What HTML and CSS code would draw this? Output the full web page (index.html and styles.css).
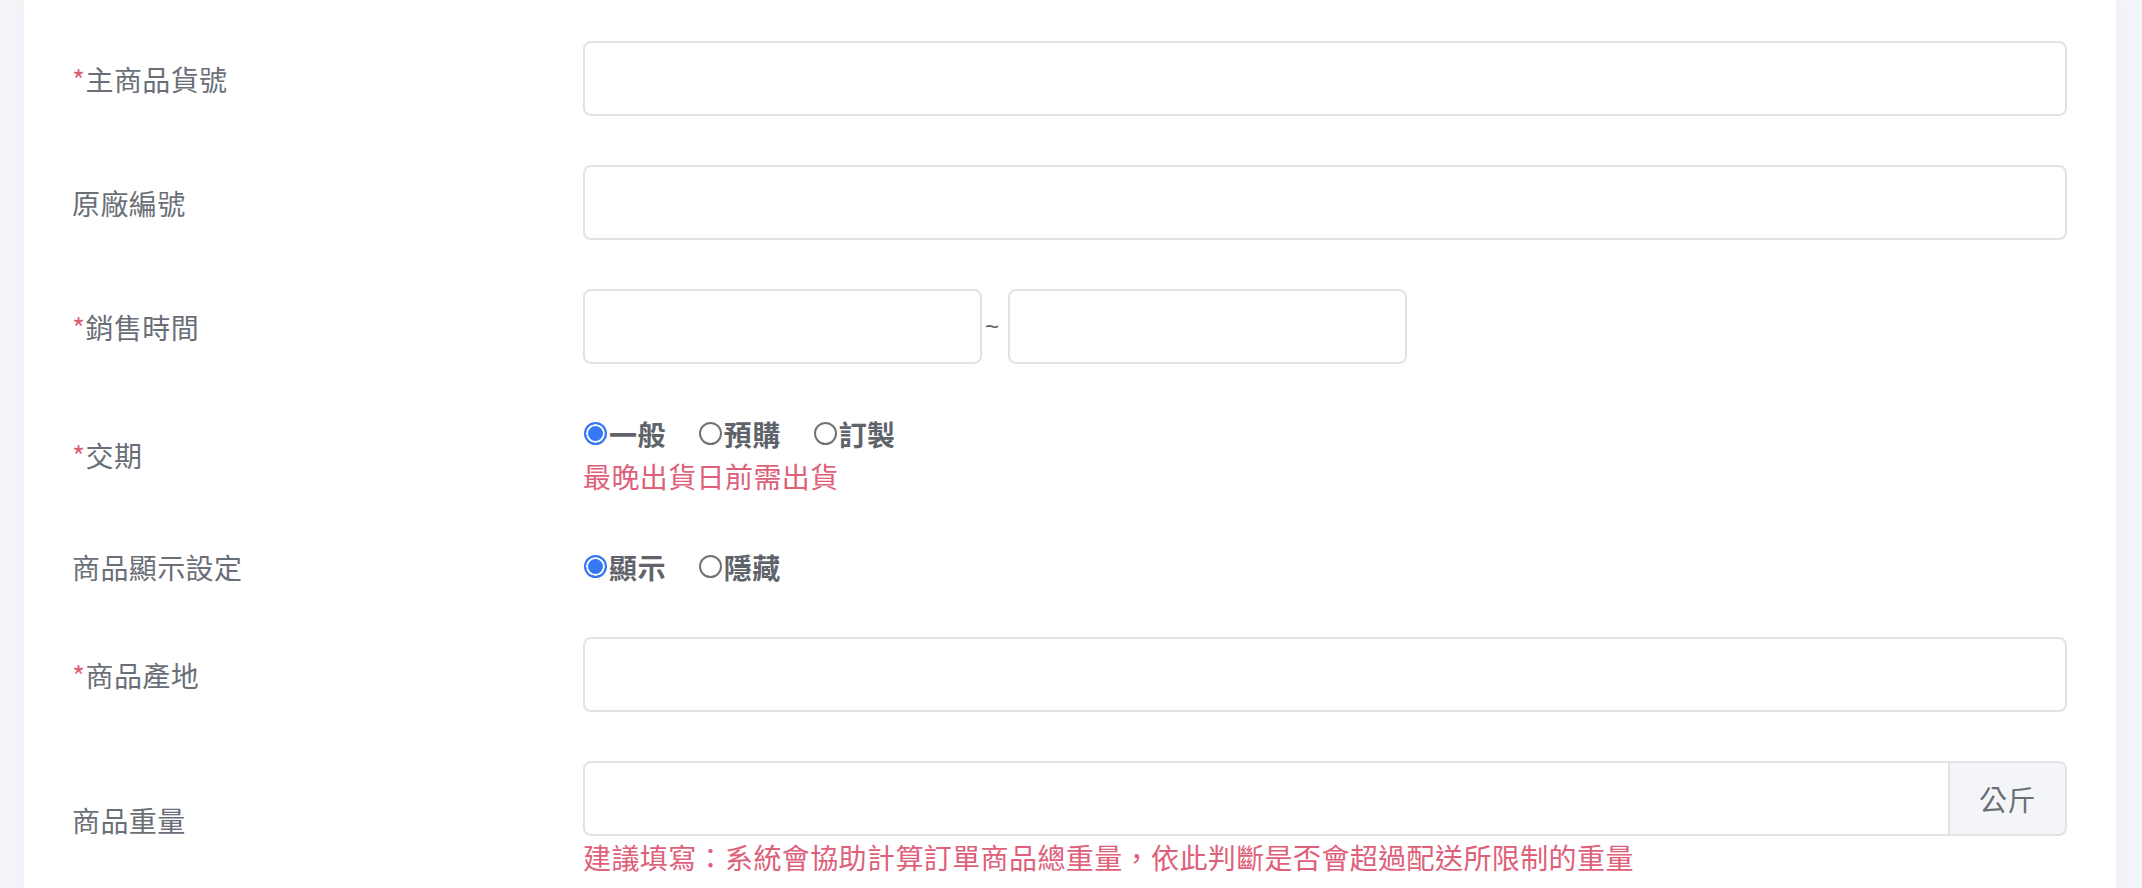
FILE: index.html
```html
<!DOCTYPE html>
<html lang="zh-Hant">
<head>
    <meta charset="UTF-8">
    <meta name="viewport" content="width=device-width, initial-scale=1.0">
    <title>商品資料</title>
    <link rel="stylesheet" href="styles.css">
</head>
<body>
    <div class="card">
        <form id="productForm">
            <div class="form-row">
                <label class="form-label" for="sku"><span class="required">*</span>主商品貨號</label>
                <div class="form-field">
                    <input type="text" id="sku" class="form-control">
                </div>
            </div>

            <div class="form-row">
                <label class="form-label" for="vendorNo">原廠編號</label>
                <div class="form-field">
                    <input type="text" id="vendorNo" class="form-control">
                </div>
            </div>

            <div class="form-row">
                <label class="form-label" for="saleStart"><span class="required">*</span>銷售時間</label>
                <div class="form-field date-range">
                    <input type="text" id="saleStart" class="form-control date">
                    <span class="tilde">~</span>
                    <input type="text" id="saleEnd" class="form-control date">
                </div>
            </div>

            <div class="form-row">
                <label class="form-label"><span class="required">*</span>交期</label>
                <div class="form-field">
                    <div class="radio-group">
                        <label class="radio"><input type="radio" name="delivery" checked>一般</label>
                        <label class="radio"><input type="radio" name="delivery">預購</label>
                        <label class="radio"><input type="radio" name="delivery">訂製</label>
                    </div>
                    <div class="hint">最晚出貨日前需出貨</div>
                </div>
            </div>

            <div class="form-row">
                <label class="form-label">商品顯示設定</label>
                <div class="form-field">
                    <div class="radio-group">
                        <label class="radio"><input type="radio" name="display" checked>顯示</label>
                        <label class="radio"><input type="radio" name="display">隱藏</label>
                    </div>
                </div>
            </div>

            <div class="form-row">
                <label class="form-label" for="origin"><span class="required">*</span>商品產地</label>
                <div class="form-field">
                    <input type="text" id="origin" class="form-control">
                </div>
            </div>

            <div class="form-row">
                <label class="form-label" for="weight">商品重量</label>
                <div class="form-field">
                    <div class="input-group">
                        <input type="text" id="weight" class="form-control">
                        <span class="addon">公斤</span>
                    </div>
                    <div class="hint">建議填寫：系統會協助計算訂單商品總重量，依此判斷是否會超過配送所限制的重量</div>
                </div>
            </div>
        </form>
    </div>
</body>
</html>
```

FILE: styles.css
```css
html {
    overflow: hidden;
}
body {
    margin: 0;
    font-family: "Noto Sans CJK TC", "Noto Sans", sans-serif;
    letter-spacing: 0.4px;
    background-color: #f4f5f9;
    color: #6a6f77;
}
.card {
    margin: 0 26px 0 24px;
    padding: 41px 49px 0 48px;
    min-height: 100vh;
    background: #ffffff;
    box-shadow: 0 0 24px rgba(30, 40, 90, 0.03);
}
.form-row {
    display: flex;
    align-items: center;
    margin-bottom: 49px;
}
.form-label {
    flex: none;
    width: 511px;
    font-size: 28px;
    line-height: 42px;
}
.required {
    color: #de6079;
}
.form-field {
    flex: 1;
    min-width: 0;
}
.form-control {
    display: block;
    box-sizing: border-box;
    width: 100%;
    height: 75px;
    margin: 0;
    padding: 0 20px;
    font-size: 28px;
    border: 2px solid #e1e3e7;
    border-radius: 8px;
    background: #ffffff;
    outline: none;
}
.date-range {
    display: flex;
    align-items: center;
}
.form-control.date {
    width: 399px;
}
.tilde {
    width: 23px;
    padding-left: 3px;
    font-family: "Liberation Sans", sans-serif;
    font-size: 24px;
    color: #60656c;
}
.radio-group {
    display: flex;
    align-items: center;
    font-size: 28px;
    line-height: 42px;
    font-weight: bold;
    color: #5f646b;
}
.radio {
    display: flex;
    align-items: center;
    margin-right: 32px;
}
.radio input {
    appearance: none;
    -webkit-appearance: none;
    box-sizing: border-box;
    width: 23px;
    height: 23px;
    margin: 0 2px 2px 1px;
    border: 2px solid #727272;
    border-radius: 50%;
    background: #ffffff;
}
.radio input:checked {
    border-color: #3478f6;
    background: #3478f6;
    box-shadow: inset 0 0 0 2px #ffffff;
}
.hint {
    font-size: 28px;
    line-height: 42px;
    color: #de6079;
}
.input-group {
    display: flex;
}
.input-group .form-control {
    border-top-right-radius: 0;
    border-bottom-right-radius: 0;
}
.addon {
    flex: none;
    box-sizing: border-box;
    width: 117px;
    height: 75px;
    display: flex;
    align-items: center;
    justify-content: center;
    font-size: 28px;
    background: #f4f5f8;
    border: 2px solid #e1e3e7;
    border-left: none;
    border-radius: 0 8px 8px 0;
}
```
